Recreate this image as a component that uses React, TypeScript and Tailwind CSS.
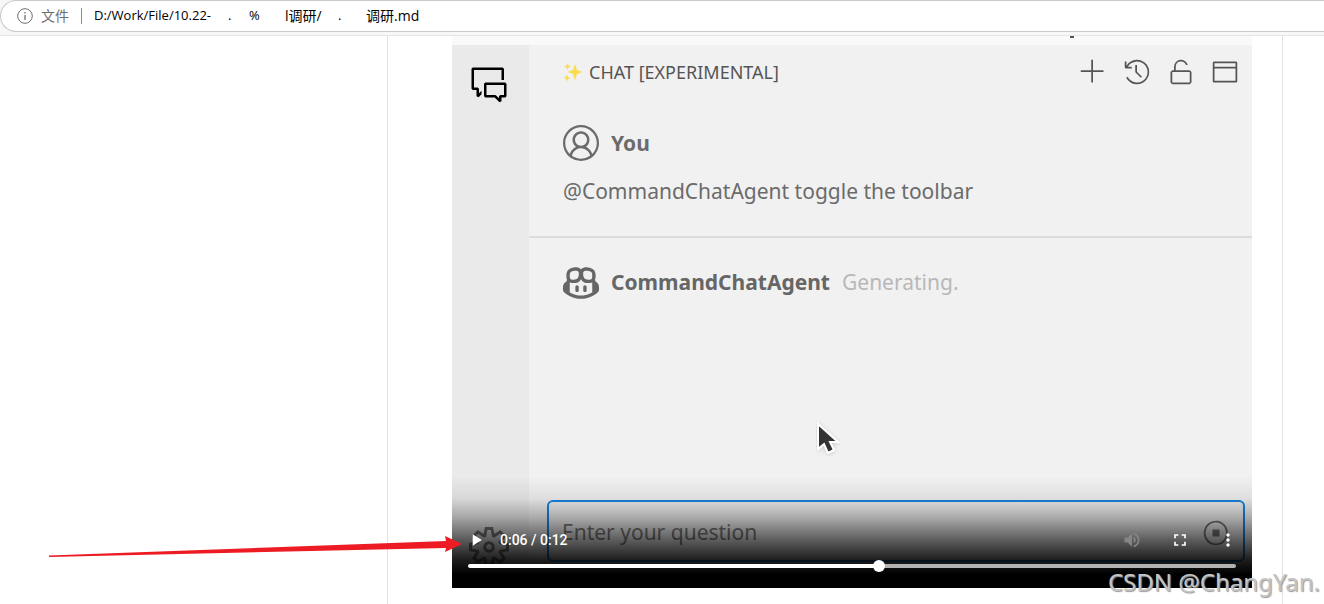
import React from "react"
import {
  VscAccount,
  VscAdd,
  VscCommentDiscussion,
  VscCopilot,
  VscHistory,
  VscSettingsGear,
  VscStopCircle,
  VscUnlock,
  VscWindow,
} from "react-icons/vsc"
import { MdFullscreen, MdMoreVert, MdPlayArrow, MdVolumeUp } from "react-icons/md"

const AddressBar = () => {
  return (
    <header className="h-9 overflow-hidden border-b border-[#e5e5e5] bg-[#f7f7f7] font-['Open_Sans','Noto_Sans_CJK_SC',sans-serif]">
      <div className="flex h-8 items-center whitespace-pre rounded-l-full border border-r-0 border-[#c8cbc9] bg-white pl-4 text-[13px] text-black">
        <svg className="size-4 text-[#6e6e6e]" viewBox="0 0 16 16" fill="none" stroke="currentColor">
          <circle cx="8" cy="8" r="7.3" />
          <path d="M8 7v5M8 4v1.4" strokeWidth="1.3" />
        </svg>
        <span className="ml-2 text-sm text-[#6e6e6e]">文件</span>
        <span className="mx-3 h-4 w-px bg-[#8a8a8a]" />
        <span className="w-[134px]">D:/Work/File/10.22-</span>
        <span className="w-[21px]">.</span>
        <span className="w-9">%</span>
        <span className="w-[53px] text-sm">l调研/</span>
        <span className="w-7">.</span>
        <span className="text-sm">调研.md</span>
      </div>
    </header>
  )
}

const Sparkles = () => {
  return (
    <svg className="size-5" viewBox="0 0 20 20" fill="#fbdc4c">
      <path d="M12 2l2 6 5.500 2-5.500 2-2 6.500-2-6.500-5.500-2 5.500-2z" />
      <path d="M4.500 1l1 2.500 2.500 1-2.500 1-1 2.500-1-2.500-2.500-1 2.500-1z" />
      <path d="M4 12.500l1 2.500 2.500 1-2.500 1-1 2.500-1-2.500-2.500-1 2.500-1z" />
    </svg>
  )
}

const ChatHeader = () => {
  return (
    <div className="flex h-[54px] items-center justify-between pl-[34px] pr-[13px]">
      <h1 className="flex items-center gap-1.5 text-lg text-[#555]">
        <Sparkles />
        CHAT [EXPERIMENTAL]
      </h1>
      <div className="flex gap-4 text-[28px] text-[#555]">
        <button aria-label="New chat"><VscAdd /></button>
        <button aria-label="History"><VscHistory /></button>
        <button aria-label="Unlock"><VscUnlock /></button>
        <button aria-label="Window"><VscWindow /></button>
      </div>
    </div>
  )
}

const Chat = () => {
  return (
    <div className="flex min-w-0 flex-1 flex-col bg-[#f1f1f1] font-['Noto_Sans',sans-serif]">
      <ChatHeader />
      <div className="h-[139px] border-b-2 border-[#dcdcdc] px-[34px] pt-[26px] text-[#6b6b6b]">
        <div className="flex h-9 items-center gap-3">
          <VscAccount className="size-9" />
          <span className="pt-0.5 text-[21px] font-bold">You</span>
        </div>
        <p className="mt-4 text-[21px] leading-7">@CommandChatAgent toggle the toolbar</p>
      </div>
      <div className="min-h-[262px] px-[34px] pt-[26px] text-[#666]">
        <div className="flex h-9 items-center gap-3">
          <VscCopilot className="size-9" />
          <span className="pt-0.5 text-[21px] font-bold">CommandChatAgent</span>
          <span className="pt-0.5 text-[21px] text-[#b8b8b8]">Generating.</span>
        </div>
      </div>
      <div className="mx-[7px] mb-[26px] ml-[18px] flex h-[62px] items-center rounded-md border-2 border-[#1a85e6] pl-[13px] pr-[13px]">
        <input
          aria-label="Question"
          placeholder="Enter your question"
          className="min-w-0 flex-1 bg-transparent pt-1 text-[21px] outline-none placeholder:text-[#7a7a7a]"
        />
        <button aria-label="Stop" className="pt-1 text-[#777]"><VscStopCircle className="size-7" /></button>
      </div>
    </div>
  )
}

const PlayerControls = () => {
  return (
    <div className="absolute inset-x-0 bottom-0 h-28 bg-[linear-gradient(to_bottom,transparent,rgba(0,0,0,0.08)_20%,rgba(0,0,0,0.28)_36%,rgba(0,0,0,0.6)_56%,rgba(0,0,0,0.88)_75%,black_88%)] px-4 pt-[52px] text-white">
      <div className="flex h-6 items-center">
        <button aria-label="Play" className="-ml-0.5"><MdPlayArrow className="size-5" /></button>
        <span className="ml-3.5 font-[Roboto,sans-serif] text-sm font-medium">0:06 / 0:12</span>
        <div className="ml-auto flex items-center gap-7">
          <button aria-label="Mute" className="text-[#858585]"><MdVolumeUp className="size-5" /></button>
          <button aria-label="Full screen"><MdFullscreen className="size-5" /></button>
          <button aria-label="More" className="-mr-0.5"><MdMoreVert className="size-5" /></button>
        </div>
      </div>
      <input
        type="range"
        aria-label="Position"
        min="0"
        max="1000"
        defaultValue="536"
        className="mt-3 block h-1 w-full appearance-none rounded-full bg-[linear-gradient(to_right,white_53.5%,#b3b3b3_53.5%)] [&::-webkit-slider-thumb]:size-3 [&::-webkit-slider-thumb]:appearance-none [&::-webkit-slider-thumb]:rounded-full [&::-webkit-slider-thumb]:bg-white"
      />
    </div>
  )
}

const Player = () => {
  return (
    <div className="relative overflow-hidden">
      <div className="h-[9px] bg-[#f9f9f9]">
        <div className="ml-auto mr-[178px] h-0.5 w-1 bg-[#555]" />
      </div>
      <div className="flex">
        <aside className="flex w-[77px] flex-col items-center justify-between bg-[#eaeaea] pb-[21px] pr-1 pt-5">
          <VscCommentDiscussion className="size-10 text-black" />
          <VscSettingsGear className="size-10 text-[#777]" />
        </aside>
        <Chat />
      </div>
      <svg className="absolute left-[364px] top-[384px] h-9 w-6" viewBox="0 0 24 36">
        <path
          d="M2 4v25l6-5 4 9 6-3-4-8h8z"
          fill="#333"
          stroke="white"
          strokeWidth="2"
          className="drop-shadow-sm"
        />
      </svg>
      <PlayerControls />
    </div>
  )
}

export default function App() {
  return (
    <div className="relative flex min-h-screen flex-col overflow-hidden bg-white">
      <AddressBar />
      <main className="ml-[387px] mr-[41px] flex-1 border-x border-[#e1e1e8] pl-16 pr-[30px]">
        <Player />
      </main>
      <svg className="absolute left-[49px] top-[534px] h-6 w-[413px]" viewBox="0 0 413 24" fill="#ed1c24">
        <path d="M0 21.500L397 7l-1-5 17 8-17 8 1-4L0 23z" />
      </svg>
      <div className="absolute bottom-1.5 right-1 font-['Noto_Sans',sans-serif] text-2xl text-[#c4c4c4] [text-shadow:1px_1px_1px_#999]">
        CSDN @ChangYan.
      </div>
    </div>
  )
}
